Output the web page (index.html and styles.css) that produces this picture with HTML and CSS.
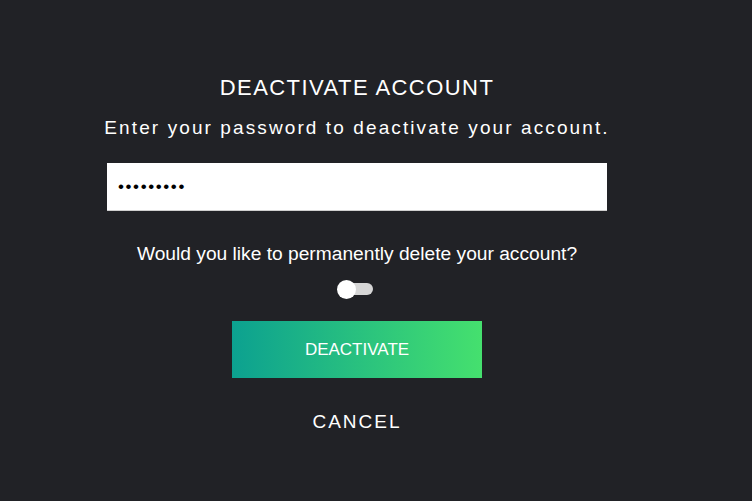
FILE: index.html
```html
<!DOCTYPE html>
<html>
<head>
<meta charset="utf-8">
<link rel="stylesheet" href="styles.css">
</head>
<body>
<div class="page">
  <div class="dialog">
    <h1 class="title">DEACTIVATE ACCOUNT</h1>
    <p class="subtitle">Enter your password to deactivate your account.</p>
    <input class="password" type="password" value="123456789">
    <p class="question">Would you like to permanently delete your account?</p>
    <div class="toggle"><span class="knob"></span></div>
    <button class="deactivate">DEACTIVATE</button>
    <button class="cancel">CANCEL</button>
  </div>
</div>
</body>
</html>
```

FILE: styles.css
```css
html, body {
  margin: 0;
  padding: 0;
  background: #212226;
  height: 100%;
}
body {
  font-family: "Liberation Sans", Arial, sans-serif;
  color: #ffffff;
}
.page {
  width: 714px;
  display: flex;
  justify-content: center;
}
.dialog {
  display: flex;
  flex-direction: column;
  align-items: center;
  padding-top: 75px;
}
.title {
  margin: 0;
  font-size: 22px;
  font-weight: normal;
  letter-spacing: 1.45px;
  line-height: 25px;
}
.subtitle {
  margin: 17px 0 0;
  font-size: 19px;
  letter-spacing: 2.1px;
  line-height: 22px;
  white-space: nowrap;
}
.password {
  margin-top: 24px;
  width: 500px;
  height: 48px;
  box-sizing: border-box;
  border: none;
  border-bottom: 1px solid #cfcfcf;
  background: #ffffff;
  padding: 0 11px;
  font-family: "Liberation Sans", Arial, sans-serif;
  font-size: 17px;
  letter-spacing: 1.6px;
  color: #000;
  outline: none;
}
.question {
  margin: 32px 0 0;
  font-size: 19.2px;
  line-height: 22px;
  white-space: nowrap;
}
.toggle {
  margin-top: 14px;
  margin-right: 4px;
  width: 36px;
  height: 20px;
  display: flex;
  align-items: center;
  position: relative;
}
.toggle::before {
  content: "";
  position: absolute;
  left: 6px;
  right: 0;
  top: 4px;
  height: 12px;
  border-radius: 6px;
  background: #d6d6d6;
}
.knob {
  position: relative;
  width: 19px;
  height: 19px;
  border-radius: 50%;
  background: #ffffff;
}
.deactivate {
  margin-top: 22px;
  width: 250px;
  height: 57px;
  border: none;
  background: linear-gradient(to right, #0ca190, #45e06e);
  color: #ffffff;
  font-family: "Liberation Sans", Arial, sans-serif;
  font-size: 17px;
  padding: 0;
}
.cancel {
  margin-top: 33px;
  border: none;
  background: none;
  color: #ffffff;
  font-family: "Liberation Sans", Arial, sans-serif;
  font-size: 19px;
  letter-spacing: 2px;
  padding: 0;
}
```
